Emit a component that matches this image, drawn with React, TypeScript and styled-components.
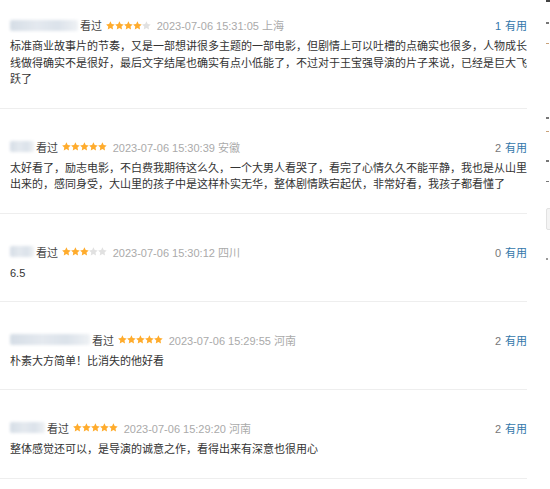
import React from "react";
import styled, { createGlobalStyle } from "styled-components";

const Global = createGlobalStyle`
  html, body { margin: 0; padding: 0; background: #fff; overflow: hidden; }
  body { font-family: "Liberation Sans", "Noto Sans CJK SC", sans-serif; }
`;

const Page = styled.div`
  display: flex;
  align-items: flex-start;
  width: 550px;
  height: 489px;
  overflow: hidden;
`;

const List = styled.div`
  width: 527px;
  flex-shrink: 0;
`;

const Item = styled.div`
  padding: 28.5px 0 20px 10px;
  border-bottom: 1px solid #eeeeee;
  &:first-child { padding-top: 16px; }
`;

const Header = styled.div`
  display: flex;
  align-items: center;
  justify-content: space-between;
  height: 18px;
  font-size: 11px;
`;

const Left = styled.div`
  display: flex;
  align-items: center;
  white-space: nowrap;
`;

const Blur = styled.div<{ $w: number }>`
  width: ${(p) => p.$w}px;
  height: 11px;
  margin-right: 2px;
  border-radius: 2px;
  background: linear-gradient(90deg, #d5dde6 0%, #e4e9ef 40%, #dbe2ea 70%, #eef1f4 100%);
  filter: blur(1.5px);
`;

const Seen = styled.span`
  color: #444;
`;

const Stars = styled.span`
  display: inline-flex;
  gap: 0.2px;
  margin-left: 4px;
  margin-right: 6px;
`;

const Meta = styled.span`
  color: #aaa;
`;

const Vote = styled.div`
  white-space: nowrap;
  color: #777;
`;

const Count = styled.span<{ $blue: boolean }>`
  color: ${(p) => (p.$blue ? "#3377aa" : "#777")};
  margin-right: 4px;
`;

const Useful = styled.span`
  color: #3377aa;
`;

const Content = styled.p`
  margin: 4px -1px 0 0;
  font-size: 11px;
  line-height: 16.7px;
  color: #333;
`;

const Side = styled.div`
  margin-left: 19px;
  width: 120px;
  flex-shrink: 0;
  display: flex;
  flex-direction: column;
`;

const Mark = styled.div<{ $mt: number; $c: string; $w?: number; $h?: number }>`
  margin-top: ${(p) => p.$mt}px;
  width: ${(p) => p.$w ?? 3}px;
  height: ${(p) => p.$h ?? 1.5}px;
  background: ${(p) => p.$c};
`;

const SideBox = styled.div`
  margin-top: 26px;
  height: 20px;
  border: 1px solid #e2e2e2;
  background: #f4f4f4;
  border-radius: 2px;
`;

const Star = ({ on }: { on: boolean }) => (
  <svg width="8.8" height="9" viewBox="1.2 1.5 21.6 20.5">
    <path
      d="M12 1.5l3.2 6.7 7.3 1-5.3 5.1 1.3 7.3L12 18.1l-6.5 3.5 1.3-7.3-5.3-5.1 7.3-1z"
      fill={on ? "#ffac2d" : "#e1e1e1"}
    />
  </svg>
);

type Review = {
  blur: number;
  stars: number;
  meta: string;
  count: number;
  blue?: boolean;
  text: string;
};

const reviews: Review[] = [
  {
    blur: 68,
    stars: 4,
    meta: "2023-07-06 15:31:05 上海",
    count: 1,
    blue: true,
    text:
      "标准商业故事片的节奏，又是一部想讲很多主题的一部电影，但剧情上可以吐槽的点确实也很多，人物成长线做得确实不是很好，最后文字结尾也确实有点小低能了，不过对于王宝强导演的片子来说，已经是巨大飞跃了",
  },
  {
    blur: 24,
    stars: 5,
    meta: "2023-07-06 15:30:39 安徽",
    count: 2,
    text:
      "太好看了，励志电影，不白费我期待这么久，一个大男人看哭了，看完了心情久久不能平静，我也是从山里出来的，感同身受，大山里的孩子中是这样朴实无华，整体剧情跌宕起伏，非常好看，我孩子都看懂了",
  },
  {
    blur: 24,
    stars: 3,
    meta: "2023-07-06 15:30:12 四川",
    count: 0,
    text: "6.5",
  },
  {
    blur: 80,
    stars: 5,
    meta: "2023-07-06 15:29:55 河南",
    count: 2,
    text: "朴素大方简单！比消失的他好看",
  },
  {
    blur: 35,
    stars: 5,
    meta: "2023-07-06 15:29:20 河南",
    count: 2,
    text: "整体感觉还可以，是导演的诚意之作，看得出来有深意也很用心",
  },
];

export default function App() {
  return (
    <>
      <Global />
      <Page>
        <List>
          {reviews.map((r, i) => (
            <Item key={i}>
              <Header>
                <Left>
                  <Blur $w={r.blur} />
                  <Seen>看过</Seen>
                  <Stars>
                    {[0, 1, 2, 3, 4].map((k) => (
                      <Star key={k} on={k < r.stars} />
                    ))}
                  </Stars>
                  <Meta>{r.meta}</Meta>
                </Left>
                <Vote>
                  <Count $blue={!!r.blue}>{r.count}</Count>
                  <Useful>有用</Useful>
                </Vote>
              </Header>
              <Content>{r.text}</Content>
            </Item>
          ))}
        </List>
        <Side>
          <Mark $mt={0} $c="#444" $w={10} $h={2} />
          <Mark $mt={20} $c="#777" />
          <Mark $mt={19} $c="#c9a27a" />
          <Mark $mt={73} $c="#777" />
          <Mark $mt={12} $c="#c9a27a" />
          <Mark $mt={28} $c="#777" />
          <Mark $mt={19} $c="#777" />
          <SideBox />
          <Mark $mt={28} $c="#999" $w={2} />
        </Side>
      </Page>
    </>
  );
}
